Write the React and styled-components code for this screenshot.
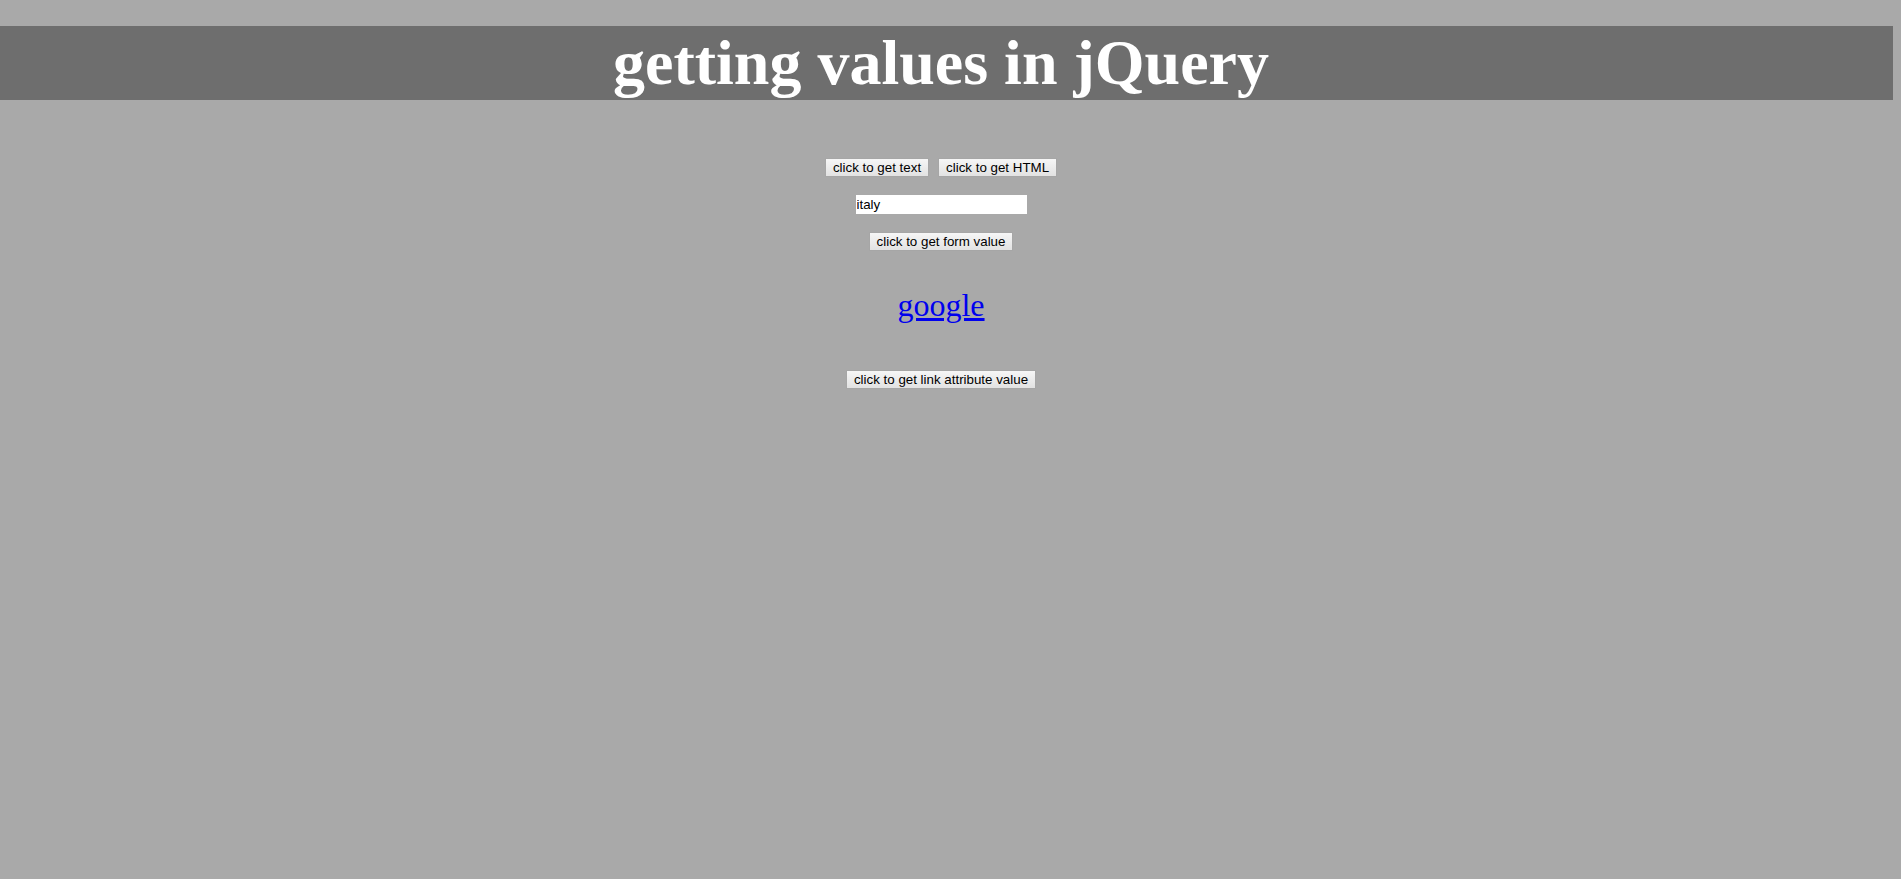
import React from 'react'
import styled, { createGlobalStyle } from 'styled-components'

const GlobalStyle = createGlobalStyle`
  html, body {
    margin: 0;
    background: #a9a9a9;
  }
  body {
    font-family: "Liberation Serif", "Times New Roman", serif;
  }
`

const Header = styled.header`
  margin-top: 26px;
  width: 1893px;
  height: 74px;
  background: #6e6e6e;
`
const Title = styled.h1`
  margin: 0;
  padding-right: 11px;
  font-family: "Liberation Serif", "Times New Roman", serif;
  font-size: 64px;
  font-weight: bold;
  line-height: 74px;
  text-align: center;
  color: #ffffff;
  white-space: nowrap;
`
const Main = styled.main`
  display: flex;
  flex-direction: column;
  align-items: center;
  padding-top: 58px;
  padding-right: 19px;
`
const ButtonRow = styled.div`
  display: flex;
  gap: 9px;
`
const Button = styled.button`
  margin-top: ${({ space }) => space || 0}px;
  height: 19px;
  padding: 0 7px;
  border: 1px solid #a6a6a6;
  border-radius: 0;
  background: linear-gradient(#f6f6f6, #e2e2e2);
  font-family: "Liberation Sans", Arial, sans-serif;
  font-size: 13.333px;
  line-height: 15px;
  color: #000;
  cursor: pointer;
`
const TextField = styled.input`
  margin-top: 18px;
  width: 171px;
  height: 19px;
  box-sizing: border-box;
  padding: 0 1px;
  border: none;
  outline: none;
  background: #fff;
  font-family: "Liberation Sans", Arial, sans-serif;
  font-size: 13.333px;
  color: #000;
`
const Link = styled.a`
  margin-top: 36px;
  font-family: "Liberation Serif", "Times New Roman", serif;
  font-size: 32px;
  line-height: normal;
  color: #0000ee;
  text-decoration: underline;
`

const App = () => {
  const [country, setCountry] = React.useState('italy')

  return (
    <>
      <GlobalStyle />
      <Header>
        <Title>getting values in jQuery</Title>
      </Header>
      <Main>
        <ButtonRow>
          <Button>click to get text</Button>
          <Button>click to get HTML</Button>
        </ButtonRow>
        <TextField value={country} onChange={e => setCountry(e.target.value)} />
        <Button space={18}>click to get form value</Button>
        <Link href="#">google</Link>
        <Button space={46}>click to get link attribute value</Button>
      </Main>
    </>
  )
}

export default App
